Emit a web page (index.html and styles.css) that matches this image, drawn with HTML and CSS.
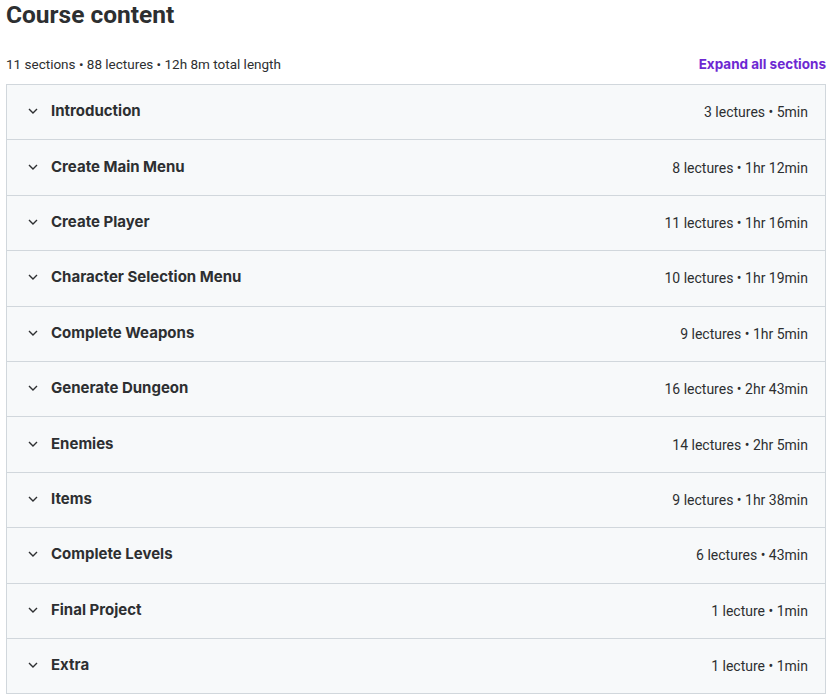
FILE: index.html
```html
<!DOCTYPE html>
<html lang="en">
<head>
    <meta charset="UTF-8">
    <meta name="viewport" content="width=device-width, initial-scale=1.0">
    <title>Course content</title>
    <link rel="stylesheet" href="styles.css">
</head>
<body>

    <div class="curriculum">
        <h2 class="curriculum-title">Course content</h2>

        <div class="curriculum-summary">
            <span>11 sections • 88 lectures • 12h 8m total length</span>
            <button class="btn-expand">Expand all sections</button>
        </div>

        <div class="sections">
            <div class="section-row">
                <svg class="chevron" viewBox="0 0 10 6" width="10" height="6"><path d="M1 1l4 4 4-4" fill="none" stroke="currentColor" stroke-width="1.4"/></svg>
                <span class="section-name">Introduction</span>
                <span class="section-meta">3 lectures • 5min</span>
            </div>
            <div class="section-row">
                <svg class="chevron" viewBox="0 0 10 6" width="10" height="6"><path d="M1 1l4 4 4-4" fill="none" stroke="currentColor" stroke-width="1.4"/></svg>
                <span class="section-name">Create Main Menu</span>
                <span class="section-meta">8 lectures • 1hr 12min</span>
            </div>
            <div class="section-row">
                <svg class="chevron" viewBox="0 0 10 6" width="10" height="6"><path d="M1 1l4 4 4-4" fill="none" stroke="currentColor" stroke-width="1.4"/></svg>
                <span class="section-name">Create Player</span>
                <span class="section-meta">11 lectures • 1hr 16min</span>
            </div>
            <div class="section-row">
                <svg class="chevron" viewBox="0 0 10 6" width="10" height="6"><path d="M1 1l4 4 4-4" fill="none" stroke="currentColor" stroke-width="1.4"/></svg>
                <span class="section-name">Character Selection Menu</span>
                <span class="section-meta">10 lectures • 1hr 19min</span>
            </div>
            <div class="section-row">
                <svg class="chevron" viewBox="0 0 10 6" width="10" height="6"><path d="M1 1l4 4 4-4" fill="none" stroke="currentColor" stroke-width="1.4"/></svg>
                <span class="section-name">Complete Weapons</span>
                <span class="section-meta">9 lectures • 1hr 5min</span>
            </div>
            <div class="section-row">
                <svg class="chevron" viewBox="0 0 10 6" width="10" height="6"><path d="M1 1l4 4 4-4" fill="none" stroke="currentColor" stroke-width="1.4"/></svg>
                <span class="section-name">Generate Dungeon</span>
                <span class="section-meta">16 lectures • 2hr 43min</span>
            </div>
            <div class="section-row">
                <svg class="chevron" viewBox="0 0 10 6" width="10" height="6"><path d="M1 1l4 4 4-4" fill="none" stroke="currentColor" stroke-width="1.4"/></svg>
                <span class="section-name">Enemies</span>
                <span class="section-meta">14 lectures • 2hr 5min</span>
            </div>
            <div class="section-row">
                <svg class="chevron" viewBox="0 0 10 6" width="10" height="6"><path d="M1 1l4 4 4-4" fill="none" stroke="currentColor" stroke-width="1.4"/></svg>
                <span class="section-name">Items</span>
                <span class="section-meta">9 lectures • 1hr 38min</span>
            </div>
            <div class="section-row">
                <svg class="chevron" viewBox="0 0 10 6" width="10" height="6"><path d="M1 1l4 4 4-4" fill="none" stroke="currentColor" stroke-width="1.4"/></svg>
                <span class="section-name">Complete Levels</span>
                <span class="section-meta">6 lectures • 43min</span>
            </div>
            <div class="section-row">
                <svg class="chevron" viewBox="0 0 10 6" width="10" height="6"><path d="M1 1l4 4 4-4" fill="none" stroke="currentColor" stroke-width="1.4"/></svg>
                <span class="section-name">Final Project</span>
                <span class="section-meta">1 lecture • 1min</span>
            </div>
            <div class="section-row">
                <svg class="chevron" viewBox="0 0 10 6" width="10" height="6"><path d="M1 1l4 4 4-4" fill="none" stroke="currentColor" stroke-width="1.4"/></svg>
                <span class="section-name">Extra</span>
                <span class="section-meta">1 lecture • 1min</span>
            </div>
        </div>
    </div>

</body>
</html>
```

FILE: styles.css
```css
body {
    font-family: Roboto, 'Noto Sans', sans-serif;
    margin: 0;
    padding: 0 7px 0 6px;
    background-color: #fff;
    color: #2d2f31;
}
.curriculum-title {
    margin: 0;
    font-size: 24.5px;
    line-height: 30px;
    font-weight: 700;
}
.curriculum-summary {
    display: flex;
    justify-content: space-between;
    align-items: center;
    margin-top: 23px;
    height: 22px;
    margin-bottom: 9px;
    font-size: 13.5px;
}
.btn-expand {
    border: none;
    background: none;
    padding: 0;
    font-family: Inter, Roboto, sans-serif;
    font-size: 13.5px;
    font-weight: 700;
    color: #6d28d2;
    cursor: pointer;
}
.sections {
    border: 1px solid #d1d7dc;
    border-bottom: none;
}
.section-row {
    display: flex;
    align-items: center;
    box-sizing: border-box;
    height: 55.4px;
    padding: 0 17px 0 21px;
    background-color: #f7f9fa;
    border-bottom: 1px solid #d1d7dc;
}
.chevron {
    color: #2d2f31;
    margin-right: 13px;
    margin-top: -2px;
}
.section-name {
    flex: 1;
    font-family: Inter, Roboto, sans-serif;
    font-size: 15px;
    font-weight: 700;
    margin-top: -3px;
}
.section-meta {
    font-size: 14px;
}
```
